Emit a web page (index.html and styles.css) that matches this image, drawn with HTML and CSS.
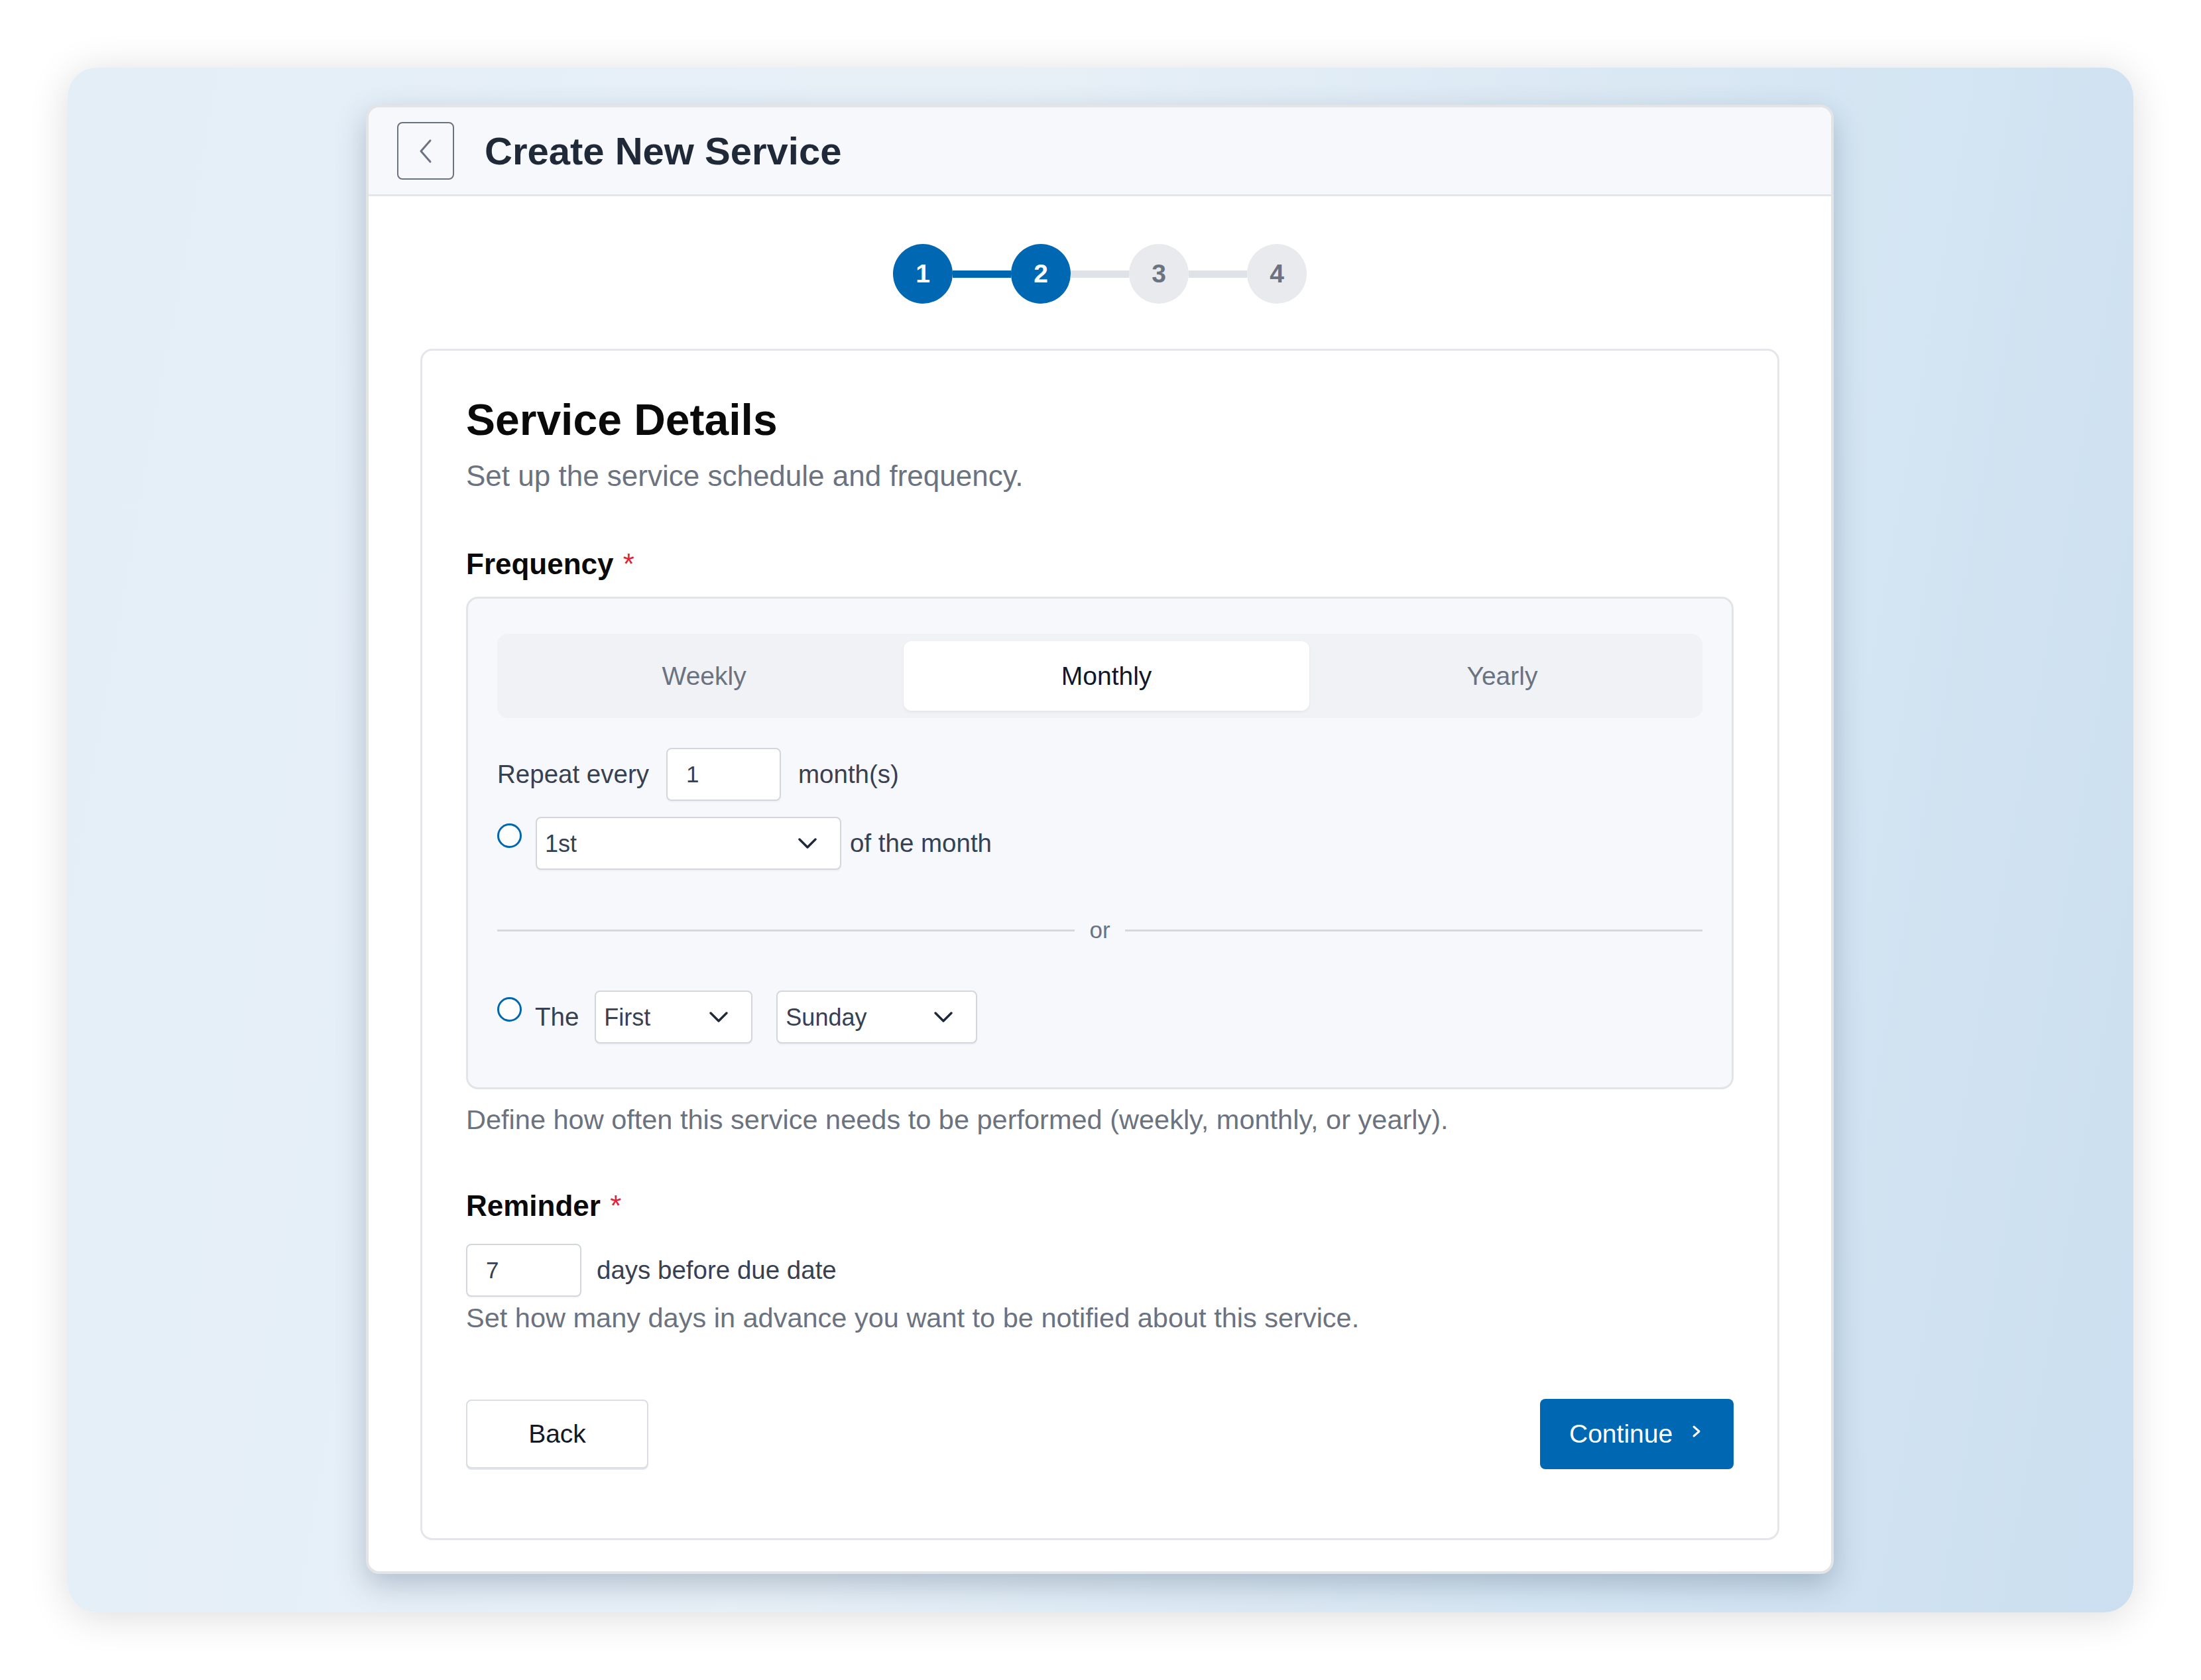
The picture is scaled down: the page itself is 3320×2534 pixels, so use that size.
FILE: index.html
```html
<!DOCTYPE html>
<html lang="en">
  <head>
    <meta charset="UTF-8" />
    <meta name="viewport" content="width=device-width, initial-scale=1.0" />
    <title>Create New Service</title>
    <link rel="stylesheet" href="styles.css">
  </head>
  <body>
    <div class="backdrop">
      <div class="window">
        <header class="window-header">
          <button class="icon-button" aria-label="Back">
            <svg width="22" height="38" viewBox="0 0 22 38" fill="none" stroke="currentColor" stroke-width="3" stroke-linecap="round" stroke-linejoin="round">
              <path d="M18 3 L4 19 L18 35" />
            </svg>
          </button>
          <h1>Create New Service</h1>
        </header>

        <div class="window-body">
          <ol class="stepper">
            <li class="step done">1</li>
            <li class="step-line done"></li>
            <li class="step done">2</li>
            <li class="step-line"></li>
            <li class="step">3</li>
            <li class="step-line"></li>
            <li class="step">4</li>
          </ol>

          <section class="card">
            <h2>Service Details</h2>
            <p class="subtitle">Set up the service schedule and frequency.</p>

            <label class="field-label">Frequency <span class="required">*</span></label>
            <div class="frequency-box">
              <div class="tabs">
                <button class="tab">Weekly</button>
                <button class="tab active">Monthly</button>
                <button class="tab">Yearly</button>
              </div>

              <div class="row repeat-row">
                <span class="row-label">Repeat every</span>
                <input class="text-input repeat-input" type="text" value="1">
                <span class="row-label">month(s)</span>
              </div>

              <div class="row choice-row">
                <input class="radio" type="radio" name="monthly-mode">
                <div class="select-wrap select-day">
                  <select>
                    <option>1st</option>
                  </select>
                  <svg class="select-arrow" width="32" height="20" viewBox="0 0 32 20" fill="none" stroke="currentColor" stroke-width="3.5" stroke-linecap="round" stroke-linejoin="round">
                    <path d="M4 4 L16 16 L28 4" />
                  </svg>
                </div>
                <span class="row-label of-month">of the month</span>
              </div>

              <div class="divider">
                <span class="divider-line"></span>
                <span class="divider-text">or</span>
                <span class="divider-line"></span>
              </div>

              <div class="row choice-row weekday-row">
                <input class="radio" type="radio" name="monthly-mode">
                <span class="row-label the-label">The</span>
                <div class="select-wrap select-order">
                  <select>
                    <option>First</option>
                  </select>
                  <svg class="select-arrow" width="32" height="20" viewBox="0 0 32 20" fill="none" stroke="currentColor" stroke-width="3.5" stroke-linecap="round" stroke-linejoin="round">
                    <path d="M4 4 L16 16 L28 4" />
                  </svg>
                </div>
                <div class="select-wrap select-weekday">
                  <select>
                    <option>Sunday</option>
                  </select>
                  <svg class="select-arrow" width="32" height="20" viewBox="0 0 32 20" fill="none" stroke="currentColor" stroke-width="3.5" stroke-linecap="round" stroke-linejoin="round">
                    <path d="M4 4 L16 16 L28 4" />
                  </svg>
                </div>
              </div>
            </div>
            <p class="help">Define how often this service needs to be performed (weekly, monthly, or yearly).</p>

            <label class="field-label reminder-label">Reminder <span class="required">*</span></label>
            <div class="row reminder-row">
              <input class="text-input reminder-input" type="text" value="7">
              <span class="row-label">days before due date</span>
            </div>
            <p class="help reminder-help">Set how many days in advance you want to be notified about this service.</p>

            <div class="actions">
              <button class="btn-back">Back</button>
              <button class="btn-continue">
                <span>Continue</span>
                <svg width="16" height="24" viewBox="0 0 16 24" fill="none" stroke="currentColor" stroke-width="3" stroke-linecap="round" stroke-linejoin="round">
                  <path d="M4 4 L12 11 L4 18" />
                </svg>
              </button>
            </div>
          </section>
        </div>
      </div>
    </div>
  </body>
</html>
```

FILE: styles.css
```css
* {
  margin: 0;
  padding: 0;
  box-sizing: border-box;
}

body {
  background-color: #ffffff;
  font-family: "Liberation Sans", Arial, sans-serif;
  color: #111827;
}

button,
input,
select {
  font-family: inherit;
}

.backdrop {
  margin: 102px;
  width: 3116px;
  height: 2330px;
  border-radius: 44px;
  background: linear-gradient(100deg, #e3eef7 0%, #e8f0f7 40%, #d6e6f3 75%, #cbdff0 100%);
  box-shadow: 0 6px 60px rgba(0, 0, 0, 0.14);
  display: flex;
  justify-content: center;
  align-items: flex-start;
  padding-top: 56px;
}

.window {
  width: 2214px;
  margin-left: -2px;
  background-color: #ffffff;
  border: 4px solid #e3e4e6;
  border-radius: 20px;
  box-shadow: 0 16px 44px rgba(38, 66, 94, 0.28);
  overflow: hidden;
}

.window-header {
  display: flex;
  align-items: center;
  gap: 46px;
  height: 134px;
  padding: 0 43px;
  background-color: #f7f8fb;
  border-bottom: 3px solid #e4e6ee;
}

.icon-button {
  width: 86px;
  height: 87px;
  display: flex;
  justify-content: center;
  align-items: center;
  border: 2px solid #6b7280;
  border-radius: 8px;
  background: none;
  color: #6b7280;
  cursor: pointer;
}

.window-header h1 {
  font-size: 58px;
  line-height: 1;
  font-weight: bold;
  color: #1f2937;
}

.window-body {
  padding: 72px 78px 47px;
}

.stepper {
  list-style: none;
  display: flex;
  justify-content: center;
  align-items: center;
  height: 90px;
  margin-bottom: 68px;
}

.step {
  width: 90px;
  height: 90px;
  border-radius: 50%;
  background-color: #e8eaed;
  color: #6b7280;
  font-size: 39px;
  font-weight: bold;
  display: flex;
  justify-content: center;
  align-items: center;
}

.step.done {
  background-color: #0067b2;
  color: #ffffff;
}

.step-line {
  width: 88px;
  height: 11px;
  background-color: #dfe2e6;
}

.step-line.done {
  background-color: #0067b2;
}

.card {
  border: 3px solid #e4e6eb;
  border-radius: 18px;
  padding: 64px 66px 104px;
}

.card h2 {
  font-size: 66px;
  line-height: 80px;
  font-weight: bold;
  color: #0a0a0a;
}

.subtitle {
  margin-top: 15px;
  font-size: 44px;
  line-height: 60px;
  color: #6b7280;
}

.field-label {
  display: block;
  margin-top: 73px;
  font-size: 44px;
  line-height: 60px;
  font-weight: bold;
  color: #0a0a0a;
}

.required {
  margin-left: 2px;
  font-weight: normal;
  color: #e0243a;
}

.frequency-box {
  margin-top: 19px;
  border: 3px solid #e2e4e8;
  border-radius: 18px;
  background-color: #f7f8fb;
  padding: 53px 44px 66px;
}

.tabs {
  display: flex;
  padding: 11px;
  border-radius: 16px;
  background-color: #f0f2f5;
}

.tab {
  flex: 1 1 auto;
  height: 105px;
  border: none;
  border-radius: 12px;
  background: none;
  font-size: 39px;
  color: #6b7280;
  cursor: pointer;
}

.tab.active {
  background-color: #ffffff;
  color: #111827;
  box-shadow: 0 2px 4px rgba(0, 0, 0, 0.06);
}

.row {
  display: flex;
  align-items: center;
  height: 80px;
}

.row-label {
  font-size: 38.5px;
  color: #374151;
}

.repeat-row {
  margin-top: 45px;
  gap: 26px;
}

.choice-row {
  margin-top: 24px;
}

.text-input {
  height: 80px;
  border: 2px solid #d3d7dd;
  border-radius: 8px;
  background-color: #ffffff;
  padding: 0 28px;
  font-size: 35px;
  color: #374151;
  box-shadow: 0 2px 2px rgba(0, 0, 0, 0.04);
  outline: none;
}

.repeat-input {
  width: 173px;
}

.reminder-input {
  width: 174px;
}

.radio {
  appearance: none;
  width: 37px;
  height: 37px;
  flex-shrink: 0;
  align-self: flex-start;
  margin: 10px 21px 0 0;
  border: 3px solid #0067b2;
  border-radius: 50%;
  background-color: #ffffff;
}

.weekday-row .radio {
  margin-right: 20px;
}

.select-wrap {
  position: relative;
  height: 80px;
}

.select-wrap select {
  appearance: none;
  width: 100%;
  height: 80px;
  border: 2px solid #d3d7dd;
  border-radius: 8px;
  background-color: #ffffff;
  padding: 0 12px;
  font-size: 36px;
  color: #374151;
  box-shadow: 0 2px 2px rgba(0, 0, 0, 0.04);
  outline: none;
}

.select-arrow {
  position: absolute;
  right: 35px;
  top: 50%;
  transform: translateY(-50%);
  color: #1f2937;
  pointer-events: none;
}

.select-day {
  width: 461px;
}

.select-order {
  width: 238px;
  margin-right: 36px;
}

.select-weekday {
  width: 303px;
}

.of-month {
  margin-left: 13px;
}

.the-label {
  margin-right: 24px;
}

.divider {
  display: flex;
  align-items: center;
  gap: 22px;
  height: 60px;
  margin: 61px 0;
}

.divider-line {
  flex: 1;
  height: 3px;
  background-color: #d5d8dd;
}

.divider-text {
  font-size: 35px;
  color: #6b7280;
}

.help {
  margin-top: 16px;
  font-size: 41.5px;
  line-height: 60px;
  color: #6b7280;
}

.reminder-label {
  margin-top: 70px;
}

.reminder-row {
  margin-top: 27px;
  gap: 23px;
}

.reminder-help {
  margin-top: 2px;
}

.actions {
  display: flex;
  justify-content: space-between;
  align-items: center;
  margin-top: 92px;
}

.btn-back {
  width: 275px;
  height: 104px;
  border: 2px solid #dadde2;
  border-radius: 8px;
  background-color: #ffffff;
  box-shadow: 0 2px 0 #e5e7eb;
  font-size: 39px;
  color: #111827;
  cursor: pointer;
}

.btn-continue {
  width: 292px;
  height: 106px;
  display: flex;
  align-items: center;
  gap: 28px;
  padding-left: 44px;
  border: none;
  border-radius: 8px;
  background-color: #0067b2;
  color: #ffffff;
  font-size: 39px;
  cursor: pointer;
}

.btn-continue svg {
  margin-top: -6px;
}
```
